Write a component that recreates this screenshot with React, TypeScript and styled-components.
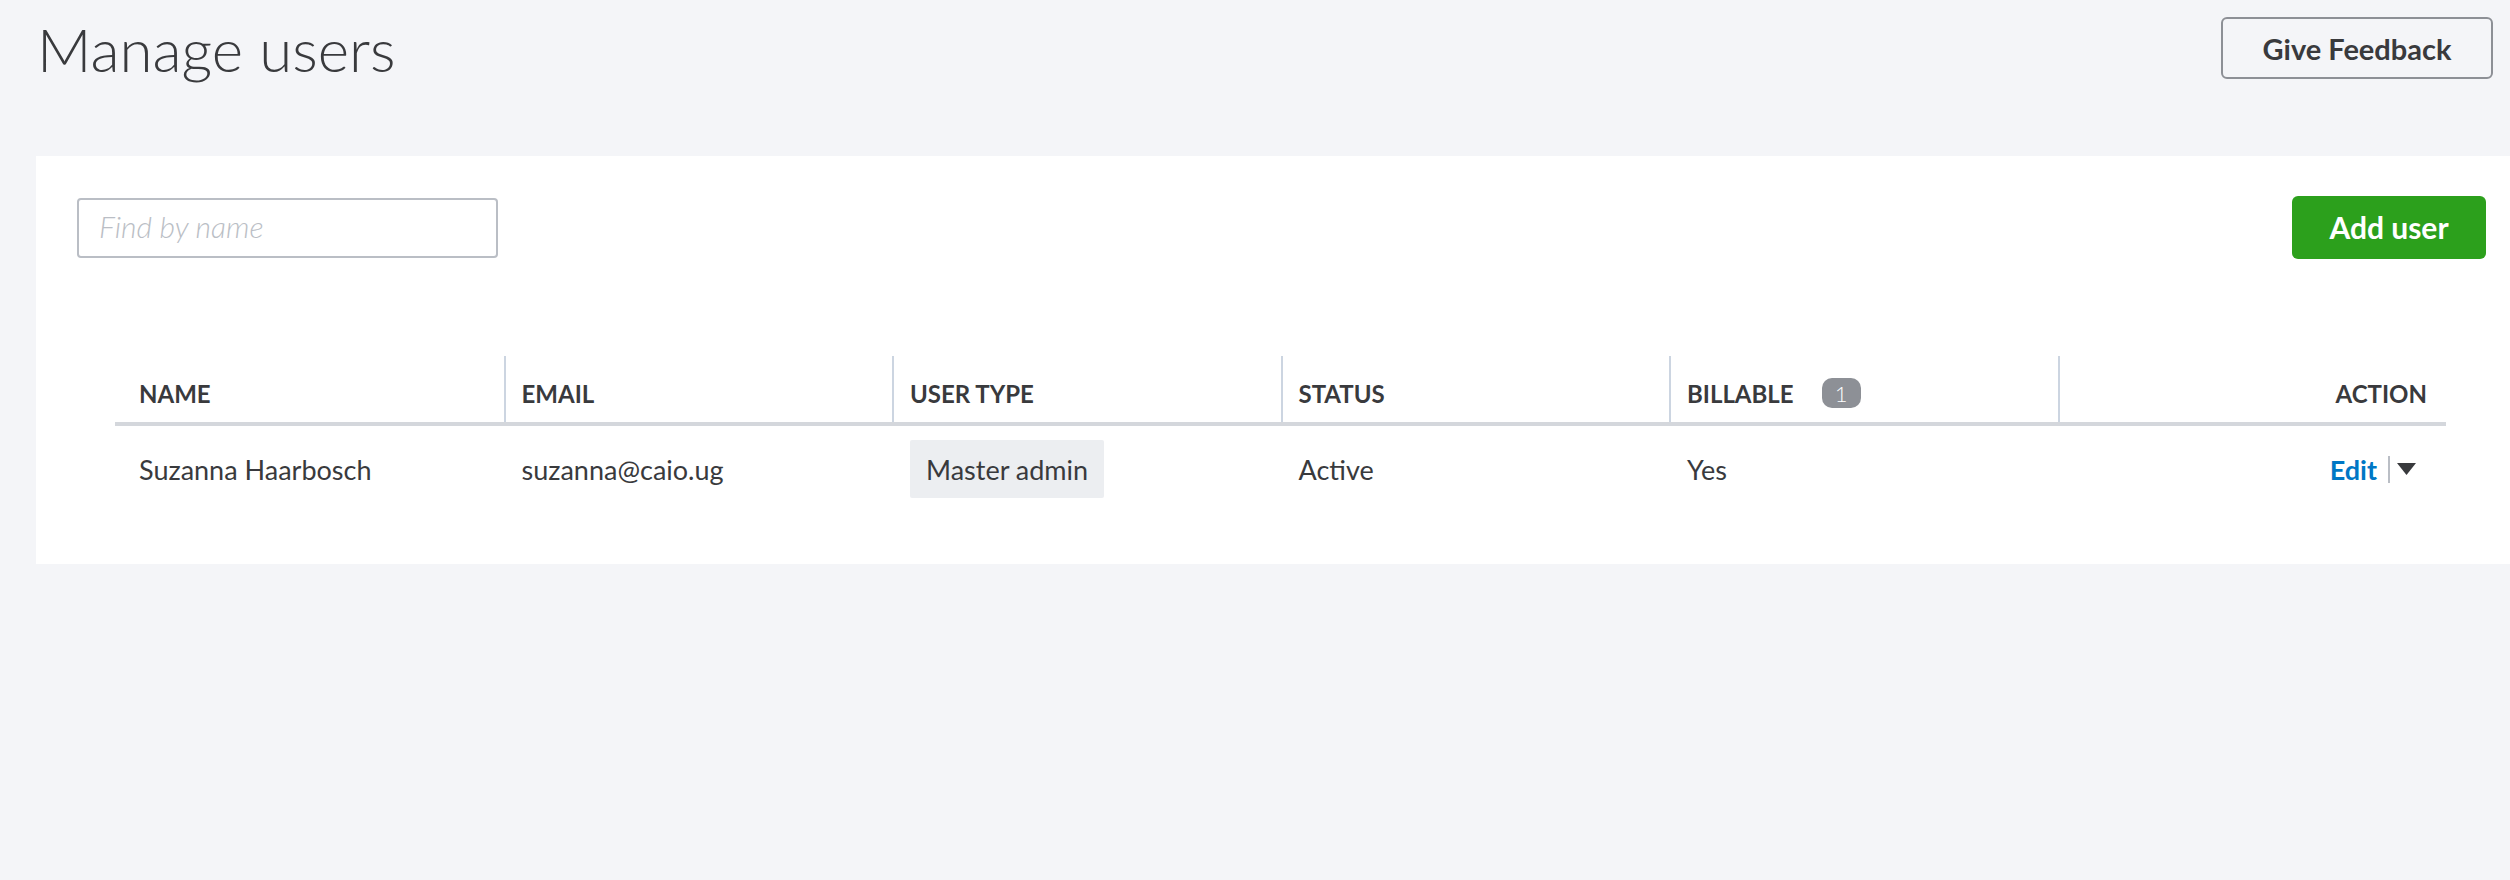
import React, { useState } from "react";
import styled, { createGlobalStyle } from "styled-components";

const GlobalStyle = createGlobalStyle`
  html, body {
    margin: 0;
    padding: 0;
    background: #f4f5f8;
  }
  body {
    font-family: Lato, "Open Sans", "Liberation Sans", sans-serif;
    color: #393a3d;
  }
  * {
    box-sizing: border-box;
  }
`;

const Page = styled.div`
  min-height: 100vh;
  padding-left: 36px;
  background: #f4f5f8;
`;

const TopBar = styled.header`
  height: 156px;
  display: flex;
  justify-content: space-between;
  align-items: flex-start;
`;

const Title = styled.h1`
  margin: 13px 0 0 1px;
  font-size: 60px;
  line-height: 72px;
  font-weight: 300;
  color: #393a3d;
`;

const OutlineButton = styled.button`
  margin: 17px 17px 0 0;
  width: 272px;
  height: 62px;
  border: 2px solid #8d9096;
  border-radius: 6px;
  background: transparent;
  font-family: inherit;
  font-size: 29px;
  font-weight: 700;
  color: #393a3d;
  cursor: pointer;
`;

const Panel = styled.section`
  background: #fff;
  padding: 40px 24px 52px 41px;
`;

const Toolbar = styled.div`
  display: flex;
  justify-content: space-between;
  align-items: center;
  margin-bottom: 97px;
`;

const SearchInput = styled.input`
  width: 421px;
  height: 60px;
  border: 2px solid #babec5;
  border-radius: 4px;
  padding: 0 0 4px 20px;
  font-family: inherit;
  font-size: 30px;
  font-weight: 300;
  color: #393a3d;
  outline: none;

  &::placeholder {
    color: #babec5;
    font-style: italic;
  }
`;

const PrimaryButton = styled.button`
  width: 194px;
  height: 63px;
  padding-bottom: 3px;
  border: none;
  border-radius: 6px;
  background: #2ca01c;
  color: #fff;
  font-family: inherit;
  font-size: 30px;
  font-weight: 700;
  cursor: pointer;
`;

const Table = styled.div`
  margin: 0 40px 0 38px;
`;

const Row = styled.div<{ $head?: boolean }>`
  display: grid;
  grid-template-columns: repeat(6, 1fr);
  align-items: stretch;
  ${(p) =>
    p.$head
      ? `
    height: 70px;
    border-bottom: 4px solid #d4d7dc;
  `
      : `
    height: 86px;
  `}
`;

const HeadCell = styled.div<{ $first?: boolean; $right?: boolean }>`
  display: flex;
  align-items: center;
  justify-content: ${(p) => (p.$right ? "flex-end" : "flex-start")};
  padding: 8px ${(p) => (p.$right ? "19px" : "16px")} 0
    ${(p) => (p.$first ? "24px" : "16px")};
  border-left: ${(p) => (p.$first ? "none" : "2px solid #ccd5e1")};
  font-size: 24px;
  font-weight: 700;
  text-transform: uppercase;
  color: #393a3d;
  white-space: nowrap;
`;

const Cell = styled.div<{ $first?: boolean; $right?: boolean }>`
  display: flex;
  align-items: center;
  justify-content: ${(p) => (p.$right ? "flex-end" : "flex-start")};
  padding: 0 ${(p) => (p.$right ? "30px" : "16px")} 0
    ${(p) => (p.$first ? "24px" : "18px")};
  font-size: 27px;
  font-weight: 400;
  color: #393a3d;
  white-space: nowrap;
`;

const Count = styled.span`
  display: inline-flex;
  align-items: center;
  justify-content: center;
  margin-left: 28px;
  width: 39px;
  height: 30px;
  border-radius: 10px;
  background: #8d9096;
  color: #fff;
  font-size: 22px;
  font-weight: 300;
`;

const RoleTag = styled.span`
  display: inline-flex;
  align-items: center;
  height: 58px;
  padding: 0 16px;
  border-radius: 2px;
  background: #eceef1;
`;

const Actions = styled.div`
  display: flex;
  align-items: center;
`;

const EditLink = styled.a`
  font-weight: 700;
  color: #0077c5;
  text-decoration: none;
  cursor: pointer;
`;

const Divider = styled.span`
  width: 2px;
  height: 27px;
  margin: 0 7px 0 11px;
  background: #babec5;
`;

const Caret = styled.button`
  display: flex;
  padding: 0;
  border: none;
  background: none;
  cursor: pointer;
`;

type User = {
  name: string;
  email: string;
  type: string;
  status: string;
  billable: string;
};

const users: User[] = [
  {
    name: "Suzanna Haarbosch",
    email: "suzanna@caio.ug",
    type: "Master admin",
    status: "Active",
    billable: "Yes",
  },
];

const App: React.FC = () => {
  const [query, setQuery] = useState("");

  const shown = users.filter((u) =>
    u.name.toLowerCase().includes(query.toLowerCase())
  );

  return (
    <Page>
      <GlobalStyle />
      <TopBar>
        <Title>Manage users</Title>
        <OutlineButton>Give Feedback</OutlineButton>
      </TopBar>
      <Panel>
        <Toolbar>
          <SearchInput
            placeholder="Find by name"
            value={query}
            onChange={(e) => setQuery(e.target.value)}
          />
          <PrimaryButton>Add user</PrimaryButton>
        </Toolbar>
        <Table>
          <Row $head>
            <HeadCell $first>Name</HeadCell>
            <HeadCell>Email</HeadCell>
            <HeadCell>User type</HeadCell>
            <HeadCell>Status</HeadCell>
            <HeadCell>
              Billable
              <Count>1</Count>
            </HeadCell>
            <HeadCell $right>Action</HeadCell>
          </Row>
          {shown.map((u) => (
            <Row key={u.email}>
              <Cell $first>{u.name}</Cell>
              <Cell>{u.email}</Cell>
              <Cell>
                <RoleTag>{u.type}</RoleTag>
              </Cell>
              <Cell>{u.status}</Cell>
              <Cell>{u.billable}</Cell>
              <Cell $right>
                <Actions>
                  <EditLink>Edit</EditLink>
                  <Divider />
                  <Caret aria-label="More actions">
                    <svg width="19" height="12" viewBox="0 0 19 12">
                      <polygon points="0,0 19,0 9.5,12" fill="#393a3d" />
                    </svg>
                  </Caret>
                </Actions>
              </Cell>
            </Row>
          ))}
        </Table>
      </Panel>
    </Page>
  );
};

export default App;
